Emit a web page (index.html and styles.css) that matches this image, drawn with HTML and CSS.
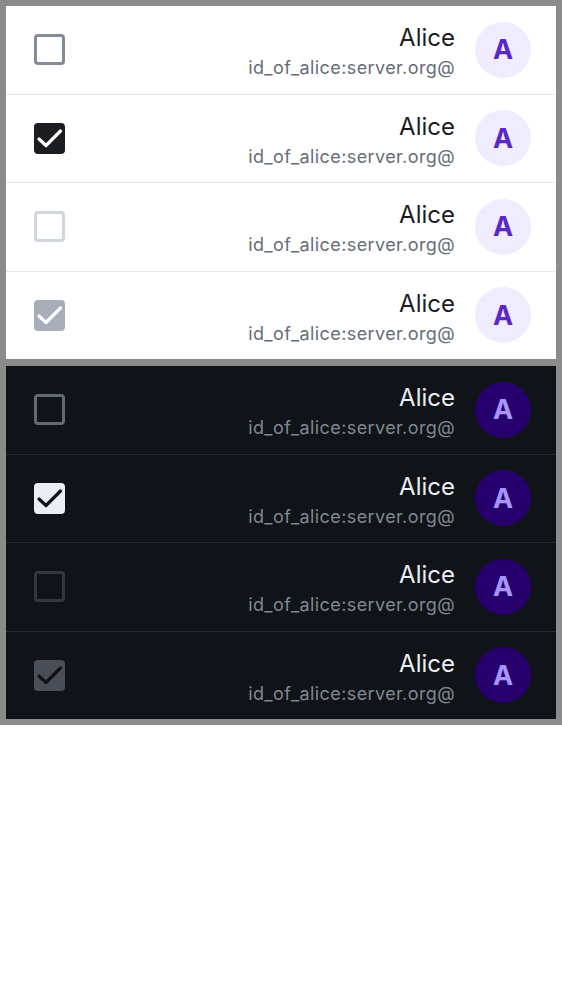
FILE: index.html
```html
<!DOCTYPE html>
<html lang="en">
<head>
<meta charset="utf-8">
<link rel="stylesheet" href="styles.css">
</head>
<body>
<div class="frame">
  <div class="panel light" dir="rtl">
    <div class="row">
      <div class="avatar">A</div>
      <div class="info"><div class="name">Alice</div><div class="mxid">@id_of_alice:server.org</div></div>
      <span class="cb"></span>
    </div>
    <div class="row">
      <div class="avatar">A</div>
      <div class="info"><div class="name">Alice</div><div class="mxid">@id_of_alice:server.org</div></div>
      <span class="cb checked"><svg viewBox="0 0 31 31"><polyline points="5,16 12,22.5 26.5,8"/></svg></span>
    </div>
    <div class="row">
      <div class="avatar">A</div>
      <div class="info"><div class="name">Alice</div><div class="mxid">@id_of_alice:server.org</div></div>
      <span class="cb disabled"></span>
    </div>
    <div class="row">
      <div class="avatar">A</div>
      <div class="info"><div class="name">Alice</div><div class="mxid">@id_of_alice:server.org</div></div>
      <span class="cb checked disabled"><svg viewBox="0 0 31 31"><polyline points="5,16 12,22.5 26.5,8"/></svg></span>
    </div>
  </div>
  <div class="panel dark" dir="rtl">
    <div class="row">
      <div class="avatar">A</div>
      <div class="info"><div class="name">Alice</div><div class="mxid">@id_of_alice:server.org</div></div>
      <span class="cb"></span>
    </div>
    <div class="row">
      <div class="avatar">A</div>
      <div class="info"><div class="name">Alice</div><div class="mxid">@id_of_alice:server.org</div></div>
      <span class="cb checked"><svg viewBox="0 0 31 31"><polyline points="5,16 12,22.5 26.5,8"/></svg></span>
    </div>
    <div class="row">
      <div class="avatar">A</div>
      <div class="info"><div class="name">Alice</div><div class="mxid">@id_of_alice:server.org</div></div>
      <span class="cb disabled"></span>
    </div>
    <div class="row">
      <div class="avatar">A</div>
      <div class="info"><div class="name">Alice</div><div class="mxid">@id_of_alice:server.org</div></div>
      <span class="cb checked disabled"><svg viewBox="0 0 31 31"><polyline points="5,16 12,22.5 26.5,8"/></svg></span>
    </div>
  </div>
</div>
</body>
</html>
```

FILE: styles.css
```css
html, body {
  margin: 0;
  padding: 0;
  background: #ffffff;
}
body {
  font-family: Inter, "Noto Sans", sans-serif;
}
.frame {
  background: #8b8b8b;
  padding: 6px;
  display: flex;
  flex-direction: column;
  gap: 7px;
}
.panel {
  height: 353px;
  display: flex;
  flex-direction: column;
}
.row {
  flex: 1;
  display: flex;
  align-items: center;
  gap: 20px;
  padding: 0 25px 0 28px;
  border-top: 1px solid transparent;
}
.row:first-child {
  border-top: none;
}
.avatar {
  width: 56px;
  height: 56px;
  border-radius: 50%;
  flex: none;
  display: flex;
  align-items: center;
  justify-content: center;
  font-weight: 700;
  font-size: 27px;
  line-height: 1;
}
.info {
  display: flex;
  flex-direction: column;
  gap: 4px;
  padding-top: 5px;
  text-align: right;
}
.name {
  font-size: 24px;
  line-height: 28px;
}
.mxid {
  font-size: 18px;
  line-height: 24px;
  letter-spacing: 0.4px;
}
.cb {
  margin-right: auto;
  width: 31px;
  height: 31px;
  box-sizing: border-box;
  border-radius: 4px;
  border: 3px solid;
  flex: none;
  display: flex;
}
.cb svg {
  width: 31px;
  height: 31px;
  margin: -3px;
  fill: none;
  stroke-width: 3.2;
  stroke-linecap: round;
  stroke-linejoin: round;
}
/* light */
.light { background: #ffffff; }
.light .row { border-top-color: #e4e8ee; }
.light .row:first-child { border-top: none; }
.light .avatar { background: #f0ecff; color: #5b27c7; }
.light .name { color: #1b1d22; }
.light .mxid { color: #656d77; }
.light .cb { border-color: #838d9a; }
.light .cb.checked { background: #1b1d22; border-color: #1b1d22; }
.light .cb.checked svg { stroke: #ffffff; }
.light .cb.disabled { border-color: #d0d6de; }
.light .cb.checked.disabled { background: #a7aeb9; border-color: #a7aeb9; }
/* dark */
.dark { background: #101317; }
.dark .row { border-top-color: #26292e; }
.dark .row:first-child { border-top: none; }
.dark .avatar { background: #27006d; color: #a894ff; }
.dark .name { color: #ebeef2; }
.dark .mxid { color: #808892; }
.dark .cb { border-color: #626972; }
.dark .cb.checked { background: #ebeef2; border-color: #ebeef2; }
.dark .cb.checked svg { stroke: #101317; }
.dark .cb.disabled { border-color: #34383e; }
.dark .cb.checked.disabled { background: #4a4e56; border-color: #4a4e56; }
```
